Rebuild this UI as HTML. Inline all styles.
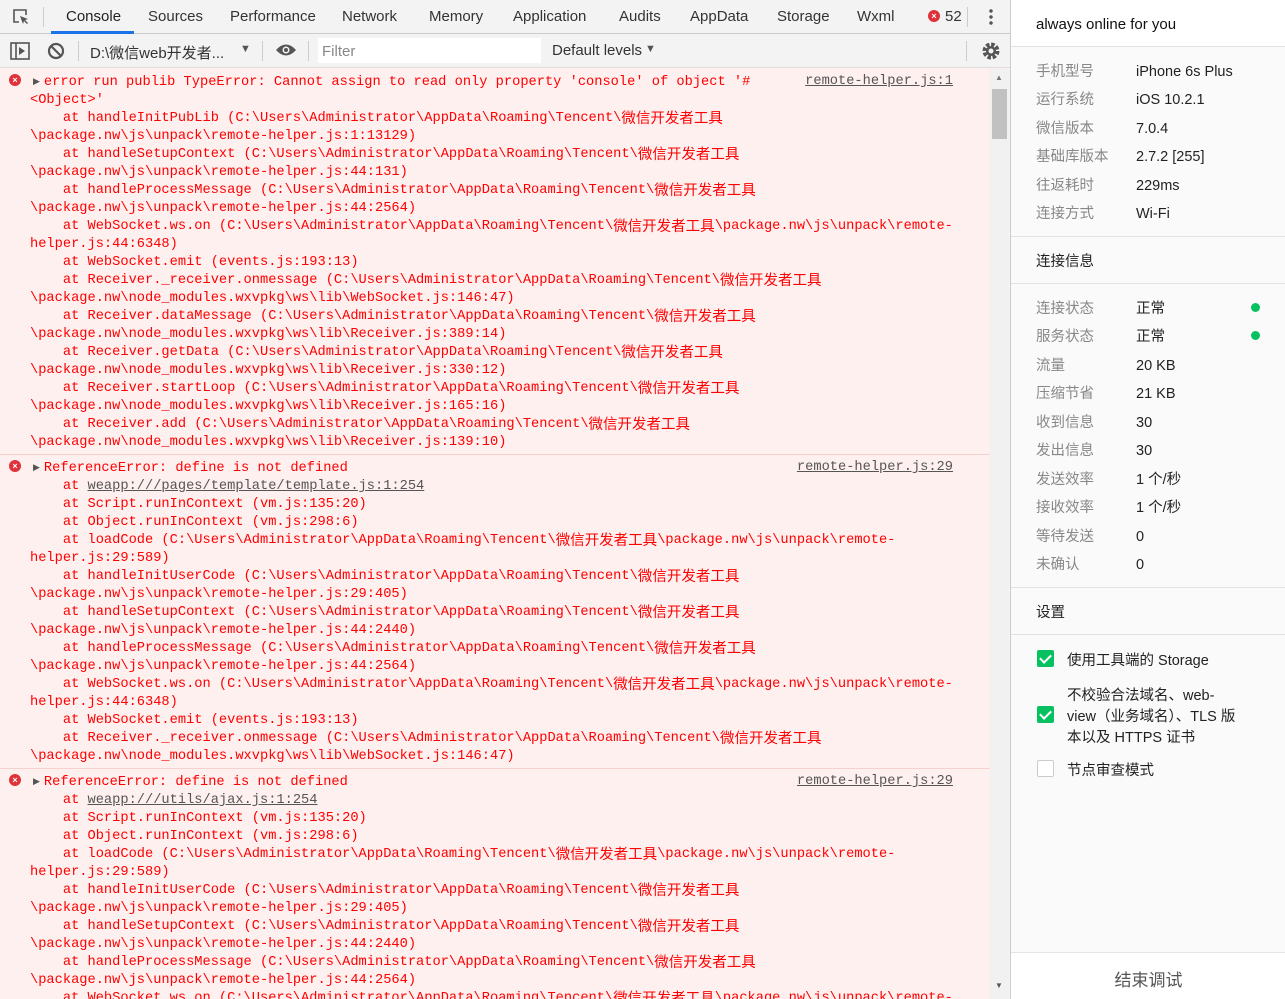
<!DOCTYPE html>
<html><head><meta charset="utf-8"><style>
*{margin:0;padding:0;box-sizing:border-box}
body{width:1285px;height:999px;overflow:hidden;position:relative;background:#fff;font-family:"Liberation Sans","Noto Sans CJK SC",sans-serif;border-bottom:2px solid #444}
#left{position:absolute;left:0;top:0;width:1010px;height:999px;background:#fff0f0}
#tabs{position:absolute;left:0;top:0;width:1010px;height:34px;background:#f3f3f3;border-bottom:1px solid #ccc;font-size:15px;color:#333}
#tabs span{position:absolute;top:8px}
#tb{position:absolute;left:0;top:34px;width:1010px;height:34px;background:#f3f3f3;border-bottom:1px solid #ddd;font-size:15px;color:#333}
#con{position:absolute;left:0;top:69px;width:990px;height:930px;overflow:hidden;font-family:"Liberation Mono",monospace;font-size:13.7px;color:#f00}
.m{position:relative;padding:4px 0 2px 30px;border-bottom:1px solid #f7d0d0;white-space:pre;line-height:18px}
.m .ic{position:absolute;left:9px;top:5px;width:12px;height:12px;border-radius:50%;background:#e0323a;color:#fff;font:bold 9px/12px "Liberation Sans",sans-serif;text-align:center}
.m .tri{font-size:9px;color:#555;vertical-align:1px;padding:0 4px 0 3px}
.m .lk{position:absolute;right:37px;top:4px;color:#555;text-decoration:underline}
.c{font-family:"Noto Sans CJK SC",sans-serif;font-size:14.5px;display:inline-block;height:18px;line-height:15px;vertical-align:top;overflow:hidden}
.u{color:#555;text-decoration:underline}
#sb{position:absolute;left:990px;top:69px;width:19px;height:930px;background:#f1f1f1}
#right{position:absolute;left:1010px;top:0;width:275px;height:999px;background:#fafafa;border-left:1px solid #ccc;font-size:14.5px;color:#222}
.r{position:absolute;left:25px;line-height:20px;height:20px;white-space:nowrap;margin-top:2px}
.k{color:#888}
.hl{position:absolute;left:0;width:275px;height:1px;background:#e2e2e2}
.cb{position:absolute;left:26px;width:17px;height:17px;border-radius:2px;background:#07c160}
.cb:after{content:"";position:absolute;left:5px;top:2px;width:5px;height:9px;border:solid #fff;border-width:0 2px 2px 0;transform:rotate(45deg)}
.dot{position:absolute;left:240px;width:9px;height:9px;border-radius:50%;background:#07c160}
</style></head><body>
<div id="left">
<div id="tabs">
<svg style="position:absolute;left:12px;top:8px" width="18" height="18" viewBox="0 0 18 18"><path d="M7 14H2V2h12v5" fill="none" stroke="#555" stroke-width="1.6"/><path d="M8 8l8 3-3 1 3 3-1 1-3-3-1 3z" fill="#555"/></svg>
<div style="position:absolute;left:43px;top:7px;width:1px;height:20px;background:#ccc"></div>
<span style="left:66px;color:#222">Console</span>
<div style="position:absolute;left:51px;top:31px;width:83px;height:3px;background:#1a73e8"></div>
<span style="left:148px">Sources</span><span style="left:230px">Performance</span><span style="left:342px">Network</span><span style="left:429px">Memory</span><span style="left:513px">Application</span><span style="left:619px">Audits</span><span style="left:690px">AppData</span><span style="left:777px">Storage</span><span style="left:857px">Wxml</span>
<div style="position:absolute;left:928px;top:10px;width:12px;height:12px;border-radius:50%;background:#e0323a;color:#fff;font:bold 9px/12px sans-serif;text-align:center">×</div>
<span style="left:945px">52</span>
<div style="position:absolute;left:967px;top:7px;width:1px;height:20px;background:#ccc"></div>
<div style="position:absolute;left:989px;top:8px;width:4px;height:18px;background:radial-gradient(circle,#555 1.5px,transparent 2px) 0 0/4px 6px"></div>
</div>
<div id="tb">
<svg style="position:absolute;left:10px;top:8px" width="20" height="18" viewBox="0 0 20 18"><rect x="1" y="1" width="18" height="16" fill="none" stroke="#555" stroke-width="1.6"/><path d="M6 1v16" stroke="#555" stroke-width="1.6"/><path d="M9 5l6 4-6 4z" fill="#555"/></svg>
<svg style="position:absolute;left:47px;top:8px" width="18" height="18" viewBox="0 0 18 18"><circle cx="9" cy="9" r="7" fill="none" stroke="#555" stroke-width="2.2"/><path d="M4 4l10 10" stroke="#555" stroke-width="2.2"/></svg>
<div style="position:absolute;left:78px;top:7px;width:1px;height:20px;background:#ccc"></div>
<span style="position:absolute;left:90px;top:8px">D:\微信web开发者...</span>
<span style="position:absolute;left:240px;top:9px;font-size:11px;color:#555">▼</span>
<div style="position:absolute;left:262px;top:7px;width:1px;height:20px;background:#ccc"></div>
<svg style="position:absolute;left:275px;top:9px" width="22" height="14" viewBox="0 0 22 14"><path d="M1 7Q11-4 21 7Q11 18 1 7z" fill="#555"/><circle cx="11" cy="7" r="3.5" fill="#f3f3f3"/><circle cx="11" cy="7" r="2" fill="#555"/></svg>
<div style="position:absolute;left:308px;top:7px;width:1px;height:20px;background:#ccc"></div>
<div style="position:absolute;left:318px;top:4px;width:223px;height:25px;background:#fff"></div>
<span style="position:absolute;left:322px;top:9px;color:#888">Filter</span>
<span style="position:absolute;left:552px;top:8px">Default levels</span>
<span style="position:absolute;left:645px;top:9px;font-size:11px;color:#555">▼</span>
<div style="position:absolute;left:966px;top:7px;width:1px;height:20px;background:#ccc"></div>
<svg style="position:absolute;left:981px;top:7px" width="20" height="20" viewBox="0 0 20 20"><circle cx="10" cy="10" r="6.5" fill="none" stroke="#555" stroke-width="4" stroke-dasharray="3.4 1.7"/><circle cx="10" cy="10" r="5" fill="#555"/><circle cx="10" cy="10" r="2.5" fill="#f3f3f3"/></svg>
</div>
<div id="con">
<div class="m"><span class="ic">×</span><span class="tri">▶</span>error run publib TypeError: Cannot assign to read only property 'console' of object '#<span class="lk">remote-helper.js:1</span>
&lt;Object&gt;'
    at handleInitPubLib (C:\Users\Administrator\AppData\Roaming\Tencent\<span class="c">微信开发者工具</span>
\package.nw\js\unpack\remote-helper.js:1:13129)
    at handleSetupContext (C:\Users\Administrator\AppData\Roaming\Tencent\<span class="c">微信开发者工具</span>
\package.nw\js\unpack\remote-helper.js:44:131)
    at handleProcessMessage (C:\Users\Administrator\AppData\Roaming\Tencent\<span class="c">微信开发者工具</span>
\package.nw\js\unpack\remote-helper.js:44:2564)
    at WebSocket.ws.on (C:\Users\Administrator\AppData\Roaming\Tencent\<span class="c">微信开发者工具</span>\package.nw\js\unpack\remote-
helper.js:44:6348)
    at WebSocket.emit (events.js:193:13)
    at Receiver._receiver.onmessage (C:\Users\Administrator\AppData\Roaming\Tencent\<span class="c">微信开发者工具</span>
\package.nw\node_modules.wxvpkg\ws\lib\WebSocket.js:146:47)
    at Receiver.dataMessage (C:\Users\Administrator\AppData\Roaming\Tencent\<span class="c">微信开发者工具</span>
\package.nw\node_modules.wxvpkg\ws\lib\Receiver.js:389:14)
    at Receiver.getData (C:\Users\Administrator\AppData\Roaming\Tencent\<span class="c">微信开发者工具</span>
\package.nw\node_modules.wxvpkg\ws\lib\Receiver.js:330:12)
    at Receiver.startLoop (C:\Users\Administrator\AppData\Roaming\Tencent\<span class="c">微信开发者工具</span>
\package.nw\node_modules.wxvpkg\ws\lib\Receiver.js:165:16)
    at Receiver.add (C:\Users\Administrator\AppData\Roaming\Tencent\<span class="c">微信开发者工具</span>
\package.nw\node_modules.wxvpkg\ws\lib\Receiver.js:139:10)</div>
<div class="m"><span class="ic">×</span><span class="tri">▶</span>ReferenceError: define is not defined<span class="lk">remote-helper.js:29</span>
    at <span class="u">weapp:///pages/template/template.js:1:254</span>
    at Script.runInContext (vm.js:135:20)
    at Object.runInContext (vm.js:298:6)
    at loadCode (C:\Users\Administrator\AppData\Roaming\Tencent\<span class="c">微信开发者工具</span>\package.nw\js\unpack\remote-
helper.js:29:589)
    at handleInitUserCode (C:\Users\Administrator\AppData\Roaming\Tencent\<span class="c">微信开发者工具</span>
\package.nw\js\unpack\remote-helper.js:29:405)
    at handleSetupContext (C:\Users\Administrator\AppData\Roaming\Tencent\<span class="c">微信开发者工具</span>
\package.nw\js\unpack\remote-helper.js:44:2440)
    at handleProcessMessage (C:\Users\Administrator\AppData\Roaming\Tencent\<span class="c">微信开发者工具</span>
\package.nw\js\unpack\remote-helper.js:44:2564)
    at WebSocket.ws.on (C:\Users\Administrator\AppData\Roaming\Tencent\<span class="c">微信开发者工具</span>\package.nw\js\unpack\remote-
helper.js:44:6348)
    at WebSocket.emit (events.js:193:13)
    at Receiver._receiver.onmessage (C:\Users\Administrator\AppData\Roaming\Tencent\<span class="c">微信开发者工具</span>
\package.nw\node_modules.wxvpkg\ws\lib\WebSocket.js:146:47)</div>
<div class="m"><span class="ic">×</span><span class="tri">▶</span>ReferenceError: define is not defined<span class="lk">remote-helper.js:29</span>
    at <span class="u">weapp:///utils/ajax.js:1:254</span>
    at Script.runInContext (vm.js:135:20)
    at Object.runInContext (vm.js:298:6)
    at loadCode (C:\Users\Administrator\AppData\Roaming\Tencent\<span class="c">微信开发者工具</span>\package.nw\js\unpack\remote-
helper.js:29:589)
    at handleInitUserCode (C:\Users\Administrator\AppData\Roaming\Tencent\<span class="c">微信开发者工具</span>
\package.nw\js\unpack\remote-helper.js:29:405)
    at handleSetupContext (C:\Users\Administrator\AppData\Roaming\Tencent\<span class="c">微信开发者工具</span>
\package.nw\js\unpack\remote-helper.js:44:2440)
    at handleProcessMessage (C:\Users\Administrator\AppData\Roaming\Tencent\<span class="c">微信开发者工具</span>
\package.nw\js\unpack\remote-helper.js:44:2564)
    at WebSocket.ws.on (C:\Users\Administrator\AppData\Roaming\Tencent\<span class="c">微信开发者工具</span>\package.nw\js\unpack\remote-
helper.js:44:6348)</div>
</div>
<div id="sb">
<span style="position:absolute;left:5px;top:4px;font-size:8px;color:#777">▲</span>
<div style="position:absolute;left:2px;top:20px;width:15px;height:50px;background:#c1c1c1"></div>
<span style="position:absolute;left:5px;top:912px;font-size:8px;color:#555">▼</span>
</div>
</div>
<div id="right">
<div style="position:absolute;left:0;top:0;width:275px;height:46px;background:#fff"></div>
<div class="r" style="top:13px;font-size:15px;color:#111">always online for you</div>
<div class="hl" style="top:46px"></div>
<div class="r k" style="top:60px">手机型号</div><div class="r" style="left:125px;top:60px">iPhone 6s Plus</div>
<div class="r k" style="top:88px">运行系统</div><div class="r" style="left:125px;top:88px">iOS 10.2.1</div>
<div class="r k" style="top:117px">微信版本</div><div class="r" style="left:125px;top:117px">7.0.4</div>
<div class="r k" style="top:145px">基础库版本</div><div class="r" style="left:125px;top:145px">2.7.2 [255]</div>
<div class="r k" style="top:174px">往返耗时</div><div class="r" style="left:125px;top:174px">229ms</div>
<div class="r k" style="top:202px">连接方式</div><div class="r" style="left:125px;top:202px">Wi-Fi</div>
<div class="hl" style="top:236px"></div>
<div class="r" style="top:250px">连接信息</div>
<div class="hl" style="top:283px"></div>
<div class="r k" style="top:297px">连接状态</div><div class="r" style="left:125px;top:297px">正常</div><div class="dot" style="top:303px"></div>
<div class="r k" style="top:325px">服务状态</div><div class="r" style="left:125px;top:325px">正常</div><div class="dot" style="top:331px"></div>
<div class="r k" style="top:354px">流量</div><div class="r" style="left:125px;top:354px">20 KB</div>
<div class="r k" style="top:382px">压缩节省</div><div class="r" style="left:125px;top:382px">21 KB</div>
<div class="r k" style="top:411px">收到信息</div><div class="r" style="left:125px;top:411px">30</div>
<div class="r k" style="top:439px">发出信息</div><div class="r" style="left:125px;top:439px">30</div>
<div class="r k" style="top:468px">发送效率</div><div class="r" style="left:125px;top:468px">1 个/秒</div>
<div class="r k" style="top:496px">接收效率</div><div class="r" style="left:125px;top:496px">1 个/秒</div>
<div class="r k" style="top:525px">等待发送</div><div class="r" style="left:125px;top:525px">0</div>
<div class="r k" style="top:553px">未确认</div><div class="r" style="left:125px;top:553px">0</div>
<div class="hl" style="top:587px"></div>
<div class="r" style="top:601px">设置</div>
<div class="hl" style="top:634px"></div>
<div class="cb" style="top:650px"></div><div class="r" style="left:56px;top:649px">使用工具端的 Storage</div>
<div class="cb" style="top:706px"></div>
<div class="r" style="left:56px;top:684px">不校验合法域名、web-</div>
<div class="r" style="left:56px;top:705px">view（业务域名）、TLS 版</div>
<div class="r" style="left:56px;top:726px">本以及 HTTPS 证书</div>
<div style="position:absolute;left:26px;top:760px;width:17px;height:17px;border:1px solid #ccc;border-radius:2px;background:#fff"></div><div class="r" style="left:56px;top:759px">节点审查模式</div>
<div style="position:absolute;left:0;top:952px;width:275px;height:47px;background:#fff;border-top:1px solid #e5e5e5"></div>
<div style="position:absolute;left:0;top:966px;width:275px;text-align:center;font-size:17px;color:#555">结束调试</div>
</div>
</body></html>
